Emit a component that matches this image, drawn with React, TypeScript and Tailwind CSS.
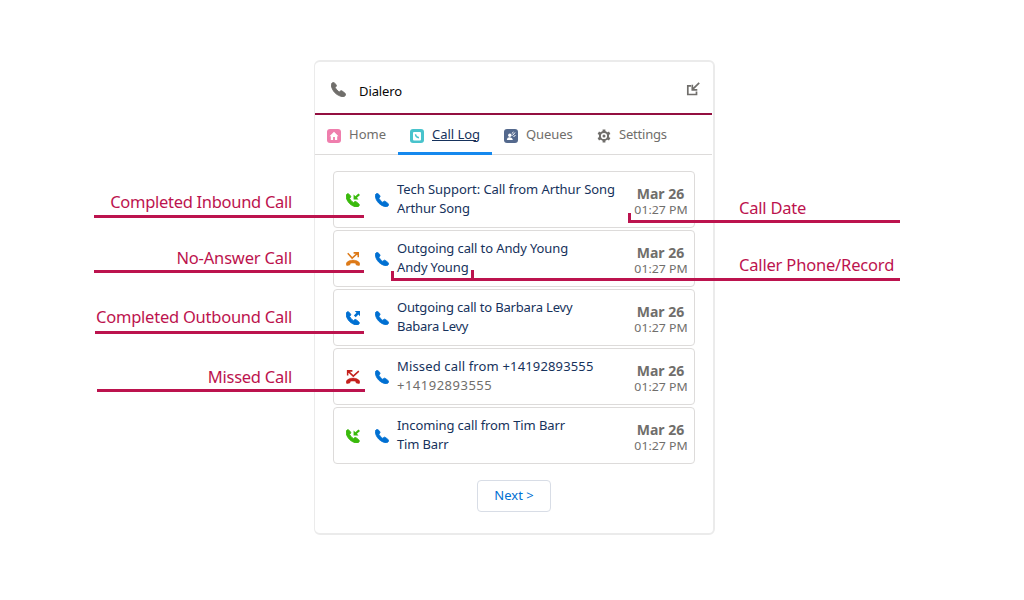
import React from "react";

const handset =
  "M22 17.6l-4-3.1c-.9-.7-2-.6-2.800.1l-1.500 1.200c-.3.3-.7.3-1 0-1-.7-2.400-2-3.400-3.100S7.400 10.300 6.700 9.300c-.2-.3-.2-.7.1-1L8 6.800c.7-.8.7-1.900.1-2.800L5 1C4.200 0 2.700 0 1.800.9L.8 1.900C.2 2.500 0 3.300 0 4c.3 5.200 2.900 10.200 6.300 13.600S14.700 23.600 19.900 24c.8 0 1.600-.2 2.200-.8l.9-1c1.100-.9 1.200-3.500-1-4.600z";

type CallKind = "inbound" | "noanswer" | "outbound" | "missed";

function Phone({ className }: { className: string }) {
  return (
    <svg viewBox="-.5 -.5 25 25" className={className} fill="currentColor" stroke="currentColor" strokeWidth="1.6" strokeLinejoin="round">
      <path d={handset} />
    </svg>
  );
}

const kindColor: Record<CallKind, string> = {
  inbound: "text-[#3aba0c]",
  noanswer: "text-[#dd7a18]",
  outbound: "text-[#0070d2]",
  missed: "text-[#c4201c]",
};

function CallIcon({ kind }: { kind: CallKind }) {
  const unanswered = kind === "noanswer" || kind === "missed";
  return (
    <svg viewBox="0 0 24 24" className={`h-[14px] w-[14px] shrink-0 ${kindColor[kind]}`} fill="currentColor">
      {unanswered ? (
        <path d="M1.200 23c-1.200-1-1.500-3.600 0-5 6-5.500 15.600-5.500 21.600 0 1.500 1.400 1.200 4 0 5-.5.500-1 .4-1.600.2l-3.400-1c-.7-.3-1-.8-1-1.500v-1c-3-1-6.600-1-9.600 0v1c0 .7-.3 1.200-1 1.500l-3.400 1c-.6.2-1.100.3-1.600-.2z" stroke="currentColor" strokeWidth="0.800" />
      ) : (
        <path d={handset} transform="translate(0 1) scale(.96)" stroke="currentColor" strokeWidth="1.600" />
      )}
      {kind === "inbound" && <path d="M13 2.500v8.500h8.500l-2.800-2.800L24 3.500 21.300.8l-5.200 4.800z" />}
      {kind === "outbound" && <path d="M15 0h9v9l-2.800-2.800-4.500 4.500-3.200-3.200L18 3z" />}
      {kind === "noanswer" && (
        <path d="M3 2l7.500 8.500L20 2M13 1.500h8V9" fill="none" stroke="currentColor" strokeWidth="2.600" />
      )}
      {kind === "missed" && (
        <path d="M22 2l-9.500 8.500L3.500 2M2.800 9.500v-8H11" fill="none" stroke="currentColor" strokeWidth="2.600" />
      )}
    </svg>
  );
}

const calls: { kind: CallKind; title: string; who: string; titleClass: string; whoClass: string }[] = [
  { kind: "inbound", title: "Tech Support: Call from Arthur Song", who: "Arthur Song", titleClass: "tracking-[-0.06px]", whoClass: "tracking-[-0.12px]" },
  { kind: "noanswer", title: "Outgoing call to Andy Young", who: "Andy Young", titleClass: "tracking-[-0.11px]", whoClass: "tracking-[-0.15px]" },
  { kind: "outbound", title: "Outgoing call to Barbara Levy", who: "Babara Levy", titleClass: "tracking-[-0.17px]", whoClass: "tracking-[-0.25px]" },
  { kind: "missed", title: "Missed call from +14192893555", who: "+14192893555", titleClass: "tracking-[0.15px]", whoClass: "tracking-[0.5px] text-[#706e6b]" },
  { kind: "inbound", title: "Incoming call from Tim Barr", who: "Tim Barr", titleClass: "tracking-[-0.1px]", whoClass: "tracking-[-0.15px]" },
];

export default function App() {
  return (
    <main className="relative flex h-[600px] w-[1024px] justify-center overflow-hidden bg-white pt-[60px] font-['Noto_Sans',sans-serif]">
      <section className="ml-[5px] flex h-[475px] w-[401px] flex-col rounded-[6px] border-2 border-l border-[#ebebeb]">
        <header className="mr-px flex h-[53px] shrink-0 items-center border-b-2 border-[#930f40] pr-[12px] pl-[16px]">
          <Phone className="mt-[3px] h-[15px] w-[15px] text-[#706e6b]" />
          <h1 className="mt-[6px] ml-[13px] text-[13px] leading-[18px] tracking-[-0.1px] text-[#080707]">Dialero</h1>
          <svg viewBox="0 0 14 14" className="mt-[2px] ml-auto h-[14px] w-[14px]" fill="none" stroke="#706e6b" strokeWidth="1.700">
            <path d="M5 3.800H1.800v8.700h8.700V9.500M13.200.8L6.800 7.200M6.300 2.800v5h5" />
          </svg>
        </header>
        <nav className="mr-px flex h-[40px] shrink-0 border-b border-[#dddbda] text-[13px] text-[#706e6b]">
          <div className="flex w-[83px] items-center pt-px pl-[12px]">
            <svg viewBox="0 0 14 14" className="mt-[2px] h-[14px] w-[14px]">
              <rect width="14" height="14" rx="3" fill="#ef7ead" />
              <path d="M7 2.800L2.500 7.300h1.300V11h2.300V8h1.800v3h2.300V7.300h1.300z" fill="white" />
            </svg>
            <span className="-mt-px ml-2">Home</span>
          </div>
          <div className="flex h-[40px] w-[94px] items-center border-b-[3px] border-[#1589ee] pt-[2px] pl-3 text-[#16325c]">
            <svg viewBox="0 0 14 14" className="mt-[3px] h-[14px] w-[14px]">
              <rect width="14" height="14" rx="3" fill="#48c3cc" />
              <rect x="3" y="3" width="8" height="8.500" rx="1" fill="white" />
              <path d="M5.500 5.200c.2 2.100 1.300 3.300 3.500 3.600" fill="none" stroke="#48c3cc" strokeWidth="1.400" />
            </svg>
            <span className="ml-2 tracking-[-0.04px] underline">Call Log</span>
          </div>
          <div className="flex w-[93px] items-center pt-px pl-3">
            <svg viewBox="0 0 14 14" className="mt-[2px] h-[14px] w-[14px]">
              <rect width="14" height="14" rx="3" fill="#54698d" />
              <circle cx="5.800" cy="6.300" r="1.700" fill="white" />
              <path d="M2.800 11c.5-2.800 2-3 3.500-2.600 1.500.2 2.300 1.100 2.500 2.600z" fill="white" />
              <path d="M7.800 4.500l1.700-1.500M8.500 6.500l2.500-3M9.500 8l2-2" stroke="white" />
            </svg>
            <span className="-mt-px ml-2 tracking-[-0.1px]">Queues</span>
          </div>
          <div className="flex items-center pt-px pl-3">
            <svg viewBox="0 0 14 14" className="mt-[2px] h-[14px] w-[14px]" fill="none" stroke="#706e6b">
              <circle cx="7" cy="7" r="4.100" strokeWidth="2" />
              <path d="M7 .5v2.500M7 11v2.500M1.300 3.700l2.200 1.300M10.500 9l2.200 1.300M1.300 10.300L3.500 9M10.500 5l2.200-1.300" strokeWidth="2.800" />
              <circle cx="7" cy="7" r="1.500" fill="#706e6b" stroke="none" />
            </svg>
            <span className="-mt-px ml-2 tracking-[-0.2px]">Settings</span>
          </div>
        </nav>
        <div className="flex flex-col gap-[2px] pt-4 pr-[18px] pl-[18px]">
          {calls.map((c) => (
            <article key={c.title} className="flex h-[57px] items-center rounded border border-[#dddbda] pr-[5px] pl-3">
              <CallIcon kind={c.kind} />
              <Phone className="ml-[15px] h-[14px] w-[14px] shrink-0 text-[#0070d2]" />
              <div className="-mt-[2px] ml-2 flex-1 text-[13px] leading-[19px] whitespace-nowrap text-[#16325c]">
                <div className={c.titleClass}>{c.title}</div>
                <div className={c.whoClass}>{c.who}</div>
              </div>
              <div className="mt-[2px] w-[56px] shrink-0 text-center whitespace-nowrap text-[#706e6b]">
                <div className="pr-px text-[14px] leading-[18px] font-bold">Mar 26</div>
                <div className="origin-center scale-x-[1.09] text-[11.3px] leading-[14px]">01:27 PM</div>
              </div>
            </article>
          ))}
        </div>
        <button className="mt-4 h-8 w-[74px] self-center rounded border border-[#d8dde6] text-[13px] text-[#0070d2]">Next &gt;</button>
      </section>

      <div className="absolute top-[189px] left-[94px] h-[29px] w-[270px] border-b-[3px] border-[#bc134e] pr-[72px] text-right text-[16.5px] leading-[26px] tracking-[-0.29px] whitespace-nowrap text-[#bc134e]">Completed Inbound Call</div>
      <div className="absolute top-[245px] left-[94px] h-[28px] w-[270px] border-b-[3px] border-[#bc134e] pr-[72px] text-right text-[16.5px] leading-[26px] tracking-[-0.18px] whitespace-nowrap text-[#bc134e]">No-Answer Call</div>
      <div className="absolute top-[304px] left-[95px] h-[30px] w-[269px] border-b-[3px] border-[#bc134e] pr-[72px] text-right text-[16.5px] leading-[26px] tracking-[-0.24px] whitespace-nowrap text-[#bc134e]">Completed Outbound Call</div>
      <div className="absolute top-[364px] left-[97px] h-[28px] w-[268px] border-b-[3px] border-[#bc134e] pr-[73px] text-right text-[16.5px] leading-[26px] tracking-[-0.25px] whitespace-nowrap text-[#bc134e]">Missed Call</div>
      <div className="absolute top-[195px] left-[739px] text-[16.5px] leading-[26px] tracking-[-0.22px] whitespace-nowrap text-[#bc134e]">Call Date</div>
      <div className="absolute top-[252px] left-[739px] text-[16.5px] leading-[26px] tracking-[-0.18px] whitespace-nowrap text-[#bc134e]">Caller Phone/Record</div>
      <div className="absolute top-[213px] left-[628px] h-[10px] w-[272px] border-b-[3px] border-[#bc134e]"><div className="h-[7px] w-[3px] bg-[#bc134e]" /></div>
      <div className="absolute top-[270px] left-[391px] h-[11px] w-[509px] border-b-[3px] border-[#bc134e]"><div className="flex h-[8px] w-[83px] justify-between"><i className="mt-px w-[3px] bg-[#bc134e]" /><i className="w-[3px] bg-[#bc134e]" /></div></div>
    </main>
  );
}
